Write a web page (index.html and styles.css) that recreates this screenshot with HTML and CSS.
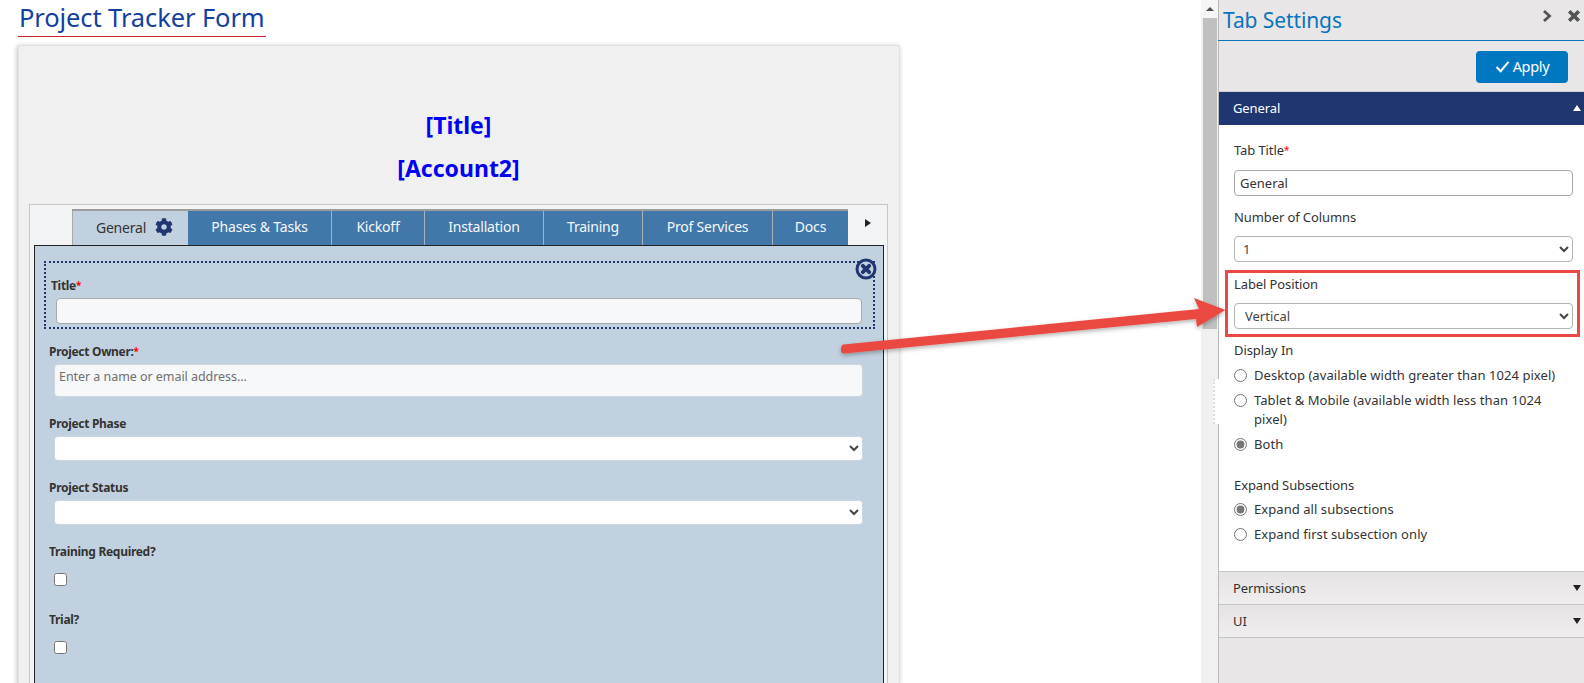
FILE: index.html
```html
<!DOCTYPE html>
<html lang="en">
<head>
<meta charset="utf-8">
<title>Project Tracker Form</title>
<link rel="stylesheet" href="styles.css">
</head>
<body>
<div class="app">
  <main class="main">
    <h1 class="page-title">Project Tracker Form</h1>
    <section class="card">
      <h2 class="form-heading">[Title]</h2>
      <h2 class="form-heading">[Account2]</h2>
      <div class="tabs-box">
        <div class="tabs-row">
          <div class="tabs">
            <div class="tab tab-active"><span>General</span>
              <svg class="gear" viewBox="0 0 512 512"><path d="M487.4 315.7l-42.6-24.6c4.3-23.2 4.3-47 0-70.2l42.6-24.6c4.9-2.8 7.1-8.6 5.5-14-11.1-35.6-30-67.8-54.7-94.6-3.8-4.1-10-5.1-14.8-2.3L380.8 110c-17.9-15.4-38.5-27.3-60.8-35.1V25.8c0-5.6-3.9-10.5-9.4-11.7-36.7-8.2-74.3-7.8-109.2 0-5.5 1.2-9.4 6.1-9.4 11.7V75c-22.2 7.9-42.8 19.8-60.8 35.1L88.7 85.5c-4.9-2.8-11-1.9-14.8 2.3-24.7 26.7-43.6 58.9-54.7 94.6-1.7 5.4.6 11.2 5.5 14L67.3 221c-4.3 23.2-4.3 47 0 70.2l-42.6 24.6c-4.9 2.8-7.1 8.6-5.5 14 11.1 35.6 30 67.8 54.7 94.6 3.8 4.1 10 5.1 14.8 2.3l42.6-24.6c17.9 15.4 38.5 27.3 60.8 35.1v49.2c0 5.6 3.9 10.5 9.4 11.7 36.7 8.2 74.3 7.8 109.2 0 5.5-1.2 9.4-6.1 9.4-11.7v-49.2c22.2-7.9 42.8-19.8 60.8-35.1l42.6 24.6c4.9 2.8 11 1.9 14.8-2.3 24.7-26.7 43.6-58.9 54.7-94.6 1.5-5.5-.7-11.3-5.6-14.1zM256 336c-44.1 0-80-35.9-80-80s35.9-80 80-80 80 35.9 80 80-35.9 80-80 80z"/></svg>
            </div>
            <div class="tab">Phases &amp; Tasks</div>
            <div class="tab">Kickoff</div>
            <div class="tab">Installation</div>
            <div class="tab">Training</div>
            <div class="tab">Prof Services</div>
            <div class="tab">Docs</div>
          </div>
          <span class="tab-next"></span>
        </div>
        <div class="tab-panel">
          <div class="selected-field">
            <label class="field-label field-label-first">Title<span class="req">*</span></label>
            <input class="title-input" type="text">
            <svg class="remove" viewBox="0 0 22 22"><circle cx="11" cy="11" r="9" fill="#c2d1df" stroke="#1f3670" stroke-width="3"/><path d="M7.8 7.8l6.400 6.400M14.200 7.800l-6.400 6.400" stroke="#1f3670" stroke-width="3.800" stroke-linecap="round"/></svg>
          </div>
          <div class="field field-owner">
            <label class="field-label">Project Owner:<span class="req">*</span></label>
            <input class="owner-input" type="text" placeholder="Enter a name or email address...">
          </div>
          <div class="field field-phase">
            <label class="field-label">Project Phase</label>
            <select class="form-select"><option></option></select>
          </div>
          <div class="field field-status">
            <label class="field-label">Project Status</label>
            <select class="form-select"><option></option></select>
          </div>
          <div class="field field-training">
            <label class="field-label">Training Required?</label>
            <input class="check" type="checkbox">
          </div>
          <div class="field field-trial">
            <label class="field-label">Trial?</label>
            <input class="check" type="checkbox">
          </div>
        </div>
      </div>
    </section>
  </main>

  <div class="scrollbar">
    <div class="scroll-up"><span class="scroll-arrow"></span></div>
    <div class="scroll-thumb"></div>
    <div class="grip"></div>
  </div>

  <aside class="panel">
    <header class="panel-head">
      <span class="panel-title">Tab Settings</span>
      <svg class="head-icon head-chevron" viewBox="0 0 12 14"><path d="M3 2l5.5 5L3 12" fill="none" stroke="#555" stroke-width="2.8"/></svg>
      <svg class="head-icon head-close" viewBox="0 0 14 14"><path d="M2.2 2.2l9.6 9.6M11.8 2.2l-9.6 9.6" fill="none" stroke="#555" stroke-width="3.6"/></svg>
    </header>
    <div class="apply-row">
      <button class="apply" type="button">
        <svg class="apply-check" viewBox="0 0 16 14"><path d="M1.5 7.5l4.5 4.5 8.5-10" fill="none" stroke="#fff" stroke-width="2.2"/></svg>Apply
      </button>
    </div>
    <div class="acc-head acc-open"><span>General</span><span class="tri tri-up"></span></div>
    <div class="acc-body">
      <label class="set-label set-first">Tab Title<span class="req">*</span></label>
      <input class="set-input" type="text" value="General">
      <label class="set-label">Number of Columns</label>
      <select class="set-select"><option>1</option></select>
      <div class="highlight">
        <label class="set-label set-hl">Label Position</label>
        <select class="set-select set-select-v"><option>Vertical</option></select>
      </div>
      <label class="set-label set-display">Display In</label>
      <label class="radio"><input type="radio" name="display"><span>Desktop (available width greater than 1024 pixel)</span></label>
      <label class="radio"><input type="radio" name="display"><span>Tablet &amp; Mobile (available width less than 1024 pixel)</span></label>
      <label class="radio"><input type="radio" name="display" checked><span>Both</span></label>
      <label class="set-label set-expand">Expand Subsections</label>
      <label class="radio"><input type="radio" name="expand" checked><span>Expand all subsections</span></label>
      <label class="radio"><input type="radio" name="expand"><span>Expand first subsection only</span></label>
    </div>
    <div class="acc-head"><span>Permissions</span><span class="tri"></span></div>
    <div class="acc-head"><span>UI</span><span class="tri"></span></div>
  </aside>
</div>

<svg class="arrow" viewBox="0 0 1584 683" aria-hidden="true">
  <defs>
    <filter id="arrow-shadow" x="-5%" y="-30%" width="110%" height="170%">
      <feDropShadow dx="0" dy="2" stdDeviation="2" flood-color="#000" flood-opacity=".3"/>
    </filter>
  </defs>
  <g filter="url(#arrow-shadow)">
    <path d="M843.5 344.5L1199 309 1194 298 1225.5 310 1197 327 1196 319 844.5 353.5Q840.500 353.500 841 349 841 345 843.500 344.500Z" fill="#ea4a43"/>
  </g>
</svg>
</body>
</html>
```
FILE: styles.css
```css
* { box-sizing: border-box; }
html, body { margin: 0; height: 683px; overflow: hidden; background: #fff; }
body { font-family: "Noto Sans", "Open Sans", sans-serif; color: #333; }
.app { display: flex; height: 683px; }

/* left page */
.main { width: 1201px; flex: none; padding-left: 18px; overflow: hidden; }
.page-title {
  display: inline-block; margin: 0; height: 37px; padding: 0 1px;
  font-size: 25.5px; line-height: 34px; font-weight: 400; color: #1240a0;
  border-bottom: 1px solid #c8202a; letter-spacing: -.1px;
}
.card {
  width: 882px; height: 640px; margin-top: 8px; padding: 58px 11px 0 10px;
  background: #f0f0f0; border: 1px solid #e0e0e0; box-shadow: -1px 1px 5px rgba(0,0,0,.25);
}
.form-heading {
  margin: 0; text-align: center; font-size: 23px; line-height: 43px; font-weight: 700; color: #0000f5;
  font-family: "Noto Sans", sans-serif;
}
.tabs-box {
  height: 480px; margin-top: 14px; padding: 4px 3px 0 4px;
  background: #f2f4f6; border: 1px solid #c6c6c6;
}
.tabs-row { display: flex; padding-left: 38px; height: 36px; }
.tabs {
  display: grid; grid-template-columns: 116px 144px 93px 119px 99px 130px 75px;
  border-top: 2px solid #9c9c9c; height: 36px;
}
.tab {
  display: flex; align-items: center; justify-content: center; padding-bottom: 3px;
  background: #4278a9; color: #f4f7fa; font-size: 14px; letter-spacing: -.2px;
  border-right: 1px solid #a5b3bf;
}
.tab:last-child { border-right: 0; }
.tab-active { background: #c2d1df; color: #333; gap: 9px; padding-left: 8px; padding-bottom: 1px; border-left: 1px solid #a9a9a9; border-right: 0; }
.gear { width: 18px; height: 18px; fill: #1f3670; margin-top: -2px; }
.tab-next {
  width: 0; height: 0; margin: 10px 0 0 17px;
  border-left: 6px solid #222; border-top: 4px solid transparent; border-bottom: 4px solid transparent;
}
.tab-panel {
  width: 850px; height: 440px; padding: 15px 9px 0;
  background: #c2d1df; border: 1px solid #222;
}
.selected-field {
  position: relative; width: 831px; height: 68px; padding: 14px 12px 0 5px;
  border: 2px dotted #1f3670;
}
.remove { position: absolute; top: -5px; right: -4px; width: 22px; height: 22px; }
.field-label { display: block; font-size: 12px; font-weight: 700; line-height: 16px; color: #333; letter-spacing: -.3px; }
.field-label-first { margin-bottom: 4px; }
.req { color: #f00; font-size: 10px; vertical-align: 1px; }
.title-input {
  display: block; width: 806px; height: 26px; margin-left: 5px;
  background: #f6f8fa; border: 1px solid #a8a8a8; border-radius: 4px;
}
.field { padding-left: 5px; }
.field-owner { margin-top: 14px; }
.field-phase { margin-top: 19px; }
.field-status { margin-top: 19px; }
.field-training { margin-top: 19px; }
.field-trial { margin-top: 26px; }
.owner-input {
  display: block; width: 809px; height: 33px; margin: 4px 0 0 5px; padding: 0 4px 9px;
  background: #f6f8fa; border: 1px solid #ccd6df; border-radius: 4px;
  font: 12.5px "Noto Sans", sans-serif; letter-spacing: -.05px;
}
.owner-input::placeholder { color: #6f6f6f; opacity: 1; }
.form-select {
  display: block; width: 809px; height: 25px; margin: 4px 0 0 5px;
  background: #fff; border: 1px solid #ccd6df; border-radius: 4px; font-size: 13px; color: #444;
}
.check {
  display: block; width: 13px; height: 13px; margin: 13px 0 0 5px;
}

/* scrollbar */
.scrollbar { position: relative; width: 17px; flex: none; background: #f0f0f0; }
.scroll-up { height: 18px; display: flex; justify-content: center; padding-top: 7px; background: #f6f6f6; }
.scroll-arrow {
  width: 0; height: 0; border-bottom: 4px solid #505050;
  border-left: 4px solid transparent; border-right: 4px solid transparent;
}
.scroll-thumb { width: 14px; height: 311px; margin-left: 2px; background: #c0c0c0; }
.grip {
  position: absolute; top: 379px; right: -1px; width: 6px; height: 45px;
  background: #fff; border-left: 2px dotted #ddd;
}

/* right panel */
.panel { width: 366px; flex: none; height: 683px; background: #e8e6e6; border-left: 1px solid #b9b9b9; }
.panel-head {
  display: flex; align-items: center; height: 41px; margin-left: -1px; padding: 0 3px 0 5px;
  border-bottom: 1px solid #0a74bd;
}
.panel-title { font-size: 21px; line-height: 43px; color: #0a74bd; flex: 1; letter-spacing: -.1px; }
.head-icon { display: block; margin-top: -9px; }
.head-chevron { width: 12px; height: 14px; margin-right: 14px; }
.head-close { width: 14px; height: 14px; }
.apply-row { display: flex; justify-content: flex-end; height: 51px; padding: 10px 16px 0 0; border-bottom: 1px solid #cfcfcf; }
.apply {
  display: flex; align-items: center; justify-content: center; gap: 3px;
  width: 92px; height: 32px; padding: 0 0 2px; border: 0; border-radius: 4px;
  background: #0078c1; color: #fff; font: 14.5px "Noto Sans", sans-serif; letter-spacing: -.3px;
}
.apply-check { width: 15px; height: 13px; }
.acc-head {
  display: flex; justify-content: space-between; align-items: center;
  height: 33px; padding: 0 3px 0 14px;
  background: linear-gradient(#e5e3e3, #efeded); border-bottom: 1px solid #c6c6c6;
  font-size: 13px; letter-spacing: -.1px; color: #333;
}
.acc-open { background: #1f3670; color: #fff; border-bottom: 0; padding-bottom: 2px; }
.tri { width: 0; height: 0; border-left: 4px solid transparent; border-right: 4px solid transparent; border-top: 6px solid #222; }
.tri-up { border-top: 0; border-bottom: 6px solid #fff; }
.acc-body { height: 447px; background: #fff; padding: 16px 10px 0 15px; border-bottom: 1px solid #c6c6c6; }
.set-label { display: block; font-size: 13px; line-height: 18px; color: #333; letter-spacing: -.1px; }
.set-input, .set-select {
  display: block; width: 339px; height: 26px; margin: 11px 0 12px;
  background: #fff; border: 1px solid #a8a8a8; border-radius: 4px;
  font: 13px "Noto Sans", sans-serif; color: #333; padding: 0 5px;
}
.set-select { padding: 0 4px; color: #444; border-color: #b4b4b4; margin-top: 10px; }
.set-select-v { padding-left: 6px; margin: 10px 0 0; }
.highlight {
  width: 355px; height: 67px; margin: -4px 0 0 -9px; padding: 2px 0 0 6px;
  border: 3px solid #ea4a43;
}
.set-hl { margin-top: 0; }
.set-display { margin-top: 4px; margin-bottom: 7px; }
.set-expand { margin-top: 22px; margin-bottom: 6px; }
.radio {
  display: flex; align-items: flex-start; gap: 7px; margin-bottom: 6px;
  font-size: 13px; line-height: 19px; color: #333; letter-spacing: .06px; width: 339px;
}
.radio input { width: 13px; height: 13px; margin: 3px 0 0; flex: none; accent-color: #777; }

/* arrow annotation */
.arrow { position: absolute; left: 0; top: 0; width: 1584px; height: 683px; pointer-events: none; }
```
